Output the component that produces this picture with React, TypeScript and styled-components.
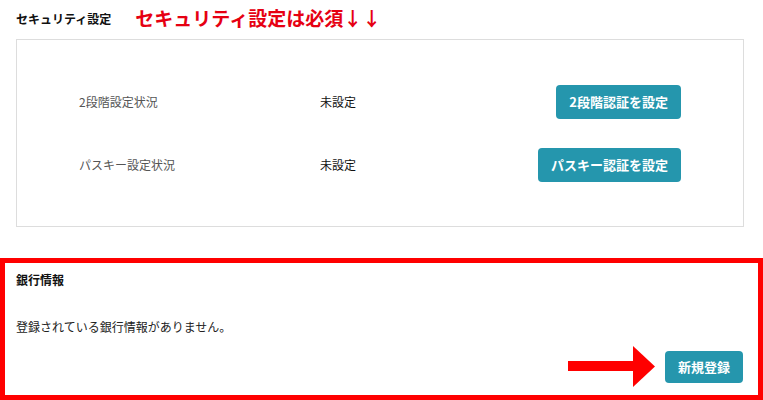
import React from 'react'
import styled, { createGlobalStyle } from 'styled-components'

const GlobalStyle = createGlobalStyle`
    body {
        margin: 0;
        background: #ffffff;
        font-family: "Noto Sans CJK JP", "Noto Sans", sans-serif;
        color: #222222;
    }
`

const Page = styled.div`
    width: 763px;
    height: 400px;
    overflow: hidden;
    display: flex;
    flex-direction: column;
`

const SectionHeader = styled.div`
    display: flex;
    align-items: center;
    height: 35px;
    padding: 0 16px;
    margin-bottom: 4px;
`

const SectionTitle = styled.h2`
    margin: 0;
    font-size: 12px;
    font-weight: 700;
    color: #111111;
    line-height: 1;
    padding-top: 2px;
`

const Notice = styled.span`
    margin-left: 24px;
    font-size: 19px;
    font-weight: 700;
    color: #e60012;
    line-height: 1;
`

const Card = styled.div`
    width: 728px;
    margin-left: 16px;
    box-sizing: border-box;
    border: 1px solid #dddddd;
    padding: 30px 62px;
`

const StatusRow = styled.div`
    display: flex;
    align-items: center;
    height: 63px;
`

const StatusLabel = styled.span`
    width: 241px;
    font-size: 12px;
    color: #555555;
`

const StatusValue = styled.span`
    flex: 1;
    font-size: 12px;
    color: #111111;
`

const TealButton = styled.button<{ $height?: number }>`
    display: inline-flex;
    align-items: center;
    justify-content: center;
    height: ${p => p.$height ?? 34}px;
    padding: 0 13px;
    border: 0;
    border-radius: 4px;
    background-color: #2596ad;
    color: #ffffff;
    font-family: inherit;
    font-size: 13px;
    font-weight: 700;
    white-space: nowrap;
    cursor: pointer;
`

const BankBox = styled.section`
    margin-top: 31px;
    flex: 1;
    box-sizing: border-box;
    border: 5px solid #ff0000;
    padding: 5px 15px 8px 11px;
    display: flex;
    flex-direction: column;
`

const BankTitle = styled.h2`
    margin: 0;
    height: 22px;
    display: flex;
    align-items: center;
    font-size: 12px;
    font-weight: 700;
    color: #111111;
`

const EmptyText = styled.p`
    margin: 28px 0 0;
    font-size: 12px;
    line-height: 18px;
    color: #222222;
`

const ActionRow = styled.div`
    margin-top: auto;
    display: flex;
    justify-content: flex-end;
    align-items: center;
    gap: 9px;
`

const Arrow = () => (
    <svg width="88" height="41" viewBox="0 0 88 41">
        <rect x="0" y="15" width="66" height="10" fill="#ff0000" />
        <polygon points="65,0 87,20.5 65,41" fill="#ff0000" />
    </svg>
)

const statuses = [
    { label: '2段階設定状況', value: '未設定', action: '2段階認証を設定' },
    { label: 'パスキー設定状況', value: '未設定', action: 'パスキー認証を設定' },
]

export default function App() {
    return (
        <Page>
            <GlobalStyle />
            <SectionHeader>
                <SectionTitle>セキュリティ設定</SectionTitle>
                <Notice>セキュリティ設定は必須↓↓</Notice>
            </SectionHeader>
            <Card>
                {statuses.map(s => (
                    <StatusRow key={s.label}>
                        <StatusLabel>{s.label}</StatusLabel>
                        <StatusValue>{s.value}</StatusValue>
                        <TealButton type='button'>{s.action}</TealButton>
                    </StatusRow>
                ))}
            </Card>
            <BankBox>
                <BankTitle>銀行情報</BankTitle>
                <EmptyText>登録されている銀行情報がありません。</EmptyText>
                <ActionRow>
                    <Arrow />
                    <TealButton type='button' $height={32}>新規登録</TealButton>
                </ActionRow>
            </BankBox>
        </Page>
    )
}
